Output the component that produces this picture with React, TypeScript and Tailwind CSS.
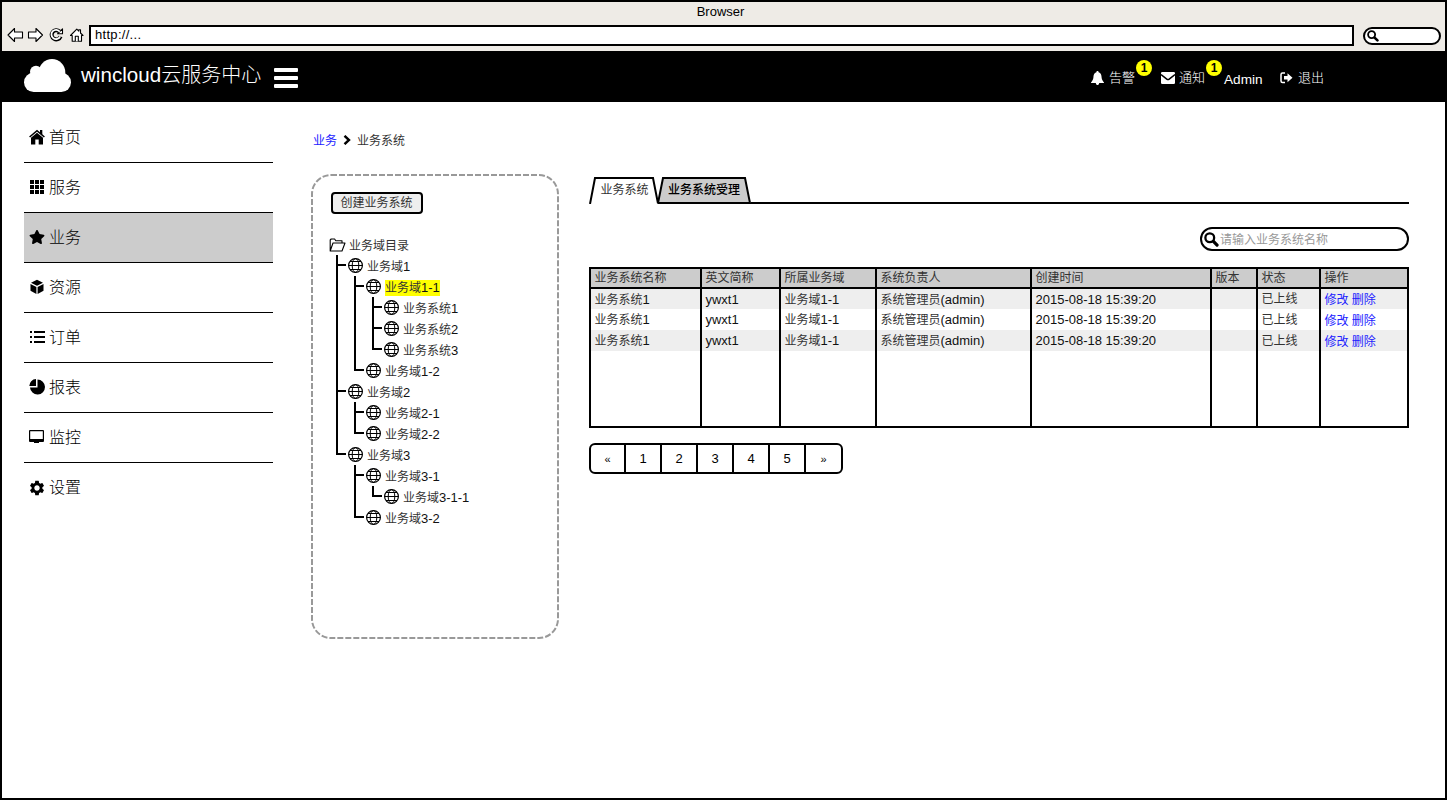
import React from 'react';
import { FaStar } from 'react-icons/fa';
import { MdSettings } from 'react-icons/md';

/* Latin runs are set slightly larger than the Chinese glyphs around them. */
function T({ children }: { children: string }) {
  const parts = children.split(/([\x21-\x7e«»]+(?: [\x21-\x7e]+)*)/);
  return (
    <>
      {parts.map((p, i) =>
        i % 2 ? (
          <span key={i} className="text-[1.083em] text-[#111111]">{p}</span>
        ) : (
          <React.Fragment key={i}>{p}</React.Fragment>
        ),
      )}
    </>
  );
}

const Magnifier = ({ className }: { className: string }) => (
  <svg viewBox="0 0 13 13" className={className} fill="none" stroke="black">
    <circle cx="5" cy="5" r="3.8" strokeWidth="2" />
    <path d="M8.2 8.2 L11.3 11.3" strokeWidth="2.8" strokeLinecap="round" />
  </svg>
);

const Globe = () => (
  <svg viewBox="0 0 16 16" className="h-4 w-4 shrink-0" fill="none" stroke="black" strokeWidth="1">
    <circle cx="8.500" cy="8.500" r="6.900" strokeWidth="1.200" />
    <ellipse cx="8.500" cy="8.500" rx="3.300" ry="6.900" />
    <path d="M1.500 8.500H15.500M3 4.500H14M3 12.500H14" />
  </svg>
);

const Folder = () => (
  <svg viewBox="0 0 17 14" className="h-[14px] w-[17px] shrink-0" fill="none" stroke="black" strokeWidth="1.1" strokeLinejoin="round">
    <path d="M1.2 13V2L2.2 1H5.6L6.8 2.8H13V5M1.2 13L4 5H16L13 13Z" />
  </svg>
);

function BrowserBar() {
  return (
    <div className="flex h-[49px] flex-col bg-[#eeebe6]">
      <div className="h-[19px] pr-[6px] text-center text-[13px] leading-[20px]">Browser</div>
      <div className="flex h-[30px] items-start">
        <svg viewBox="0 0 80 18" className="mt-[5px] ml-[3px] h-[18px] w-20" fill="white" stroke="black" strokeWidth="1.1" strokeLinejoin="round">
          <path d="M3 9L9.500 2.500V6H17.500V12H9.500V15.500Z" />
          <path d="M37.500 9L31 2.500V6H23.500V12H31V15.500Z" />
          <path d="M54.500 5.500A4.600 4.600 0 1 0 55.600 10.500" fill="none" strokeWidth="4" />
          <path d="M52.500 7.800H57.500V2.800Z" />
          <path d="M54.800 5.800A4.600 4.600 0 1 0 55.200 10.400" fill="none" stroke="white" strokeWidth="1.800" />
          <path d="M65.500 9.500L71.800 3.200L73.800 5.200V3.700H75.500V7L78 9.500H76.500V15.300H67.200V9.500Z" />
          <path d="M70.300 15.300V10.300H73.300V15.300" />
        </svg>
        <div className="mt-1 ml-1 h-[21px] w-[1265px] border-2 border-black bg-white pl-1 text-[13px] leading-[16px] tracking-[0.3px]">http://...</div>
        <div className="mt-1.5 ml-[9px] h-[18px] w-[78px] rounded-full border-2 border-black bg-white pt-px pl-0.5">
          <Magnifier className="h-3 w-3" />
        </div>
      </div>
    </div>
  );
}

const Badge = () => (
  <span className="absolute -top-2 left-full flex h-4 w-4 items-center justify-center rounded-full bg-[#ffff00] text-[12px] font-bold text-black">1</span>
);

function Header() {
  return (
    <header className="flex h-[51px] bg-black text-white">
      <svg viewBox="0 0 47 33" className="mt-2 ml-[22px] h-[33px] w-[47px]" fill="white">
        <circle cx="28" cy="13.3" r="13.3" />
        <circle cx="12" cy="12.700" r="6" />
        <circle cx="9.700" cy="23.300" r="9.700" />
        <circle cx="37.300" cy="23.300" r="9.700" />
        <rect x="9.700" y="13.700" width="27.600" height="19.300" />
      </svg>
      <div className="ml-[10px] w-[193px] text-[20px] leading-[48px] font-light whitespace-nowrap">
        <span className="text-[20.6px] font-normal">wincloud</span>云服务中心
      </div>
      <div className="mt-[17px] flex h-5 w-6 flex-col justify-between">
        <i className="h-1 rounded-[1px] bg-white" />
        <i className="h-1 rounded-[1px] bg-white" />
        <i className="h-1 rounded-[1px] bg-white" />
      </div>
      <div className="ml-[793px] flex h-[54px] items-center text-[13px] font-light whitespace-nowrap">
        <svg viewBox="0 0 13 14" className="h-[14px] w-[13px]" fill="white">
          <path d="M6.500 0C7.200 0 7.600 .6 7.600 1.200C10 1.700 10.500 4 10.600 6.500C10.700 9 12 10 13 11.400V12H0V11.400C1 10 2.300 9 2.400 6.500C2.500 4 3 1.700 5.400 1.200C5.400 .6 5.800 0 6.500 0ZM4.800 12H8.200C8 13.500 7.300 14 6.500 14S5 13.500 4.800 12Z" />
        </svg>
        <span className="relative ml-[5px] w-[27px]">告警<Badge /></span>
        <svg viewBox="0 0 14 12" className="ml-[25px] h-3 w-[14px]">
          <rect width="14" height="12" rx="1.200" fill="white" />
          <path d="M0 2.500L5.800 7.200Q7 8 8.200 7.200L14 2.500" fill="none" stroke="black" strokeWidth="1.500" />
        </svg>
        <span className="relative ml-1 w-[27px]">通知<Badge /></span>
        <span className="mt-[4px] ml-[18px] w-[39px] text-[13.6px] font-normal">Admin</span>
        <svg viewBox="0 0 13 12" className="ml-[17px] h-3 w-[13px]">
          <path d="M5 1H2.500Q1 1 1 2.500V9Q1 10.500 2.500 10.500H5" fill="none" stroke="white" strokeWidth="1.500" />
          <path d="M4 4H7.500V1.200L12.500 5.800L7.500 10.300V7.600H4Z" fill="white" />
        </svg>
        <span className="ml-[5px]">退出</span>
      </div>
    </header>
  );
}

const icon = 'h-4 w-4';
const nav: { label: string; glyph: React.ReactNode; active?: boolean }[] = [
  {
    label: '首页',
    glyph: (
      <svg viewBox="0 0 16 16" className={icon}>
        <path d="M2 8.800L8 3.700L14 8.800V15.500H9.700V10.500H6.300V15.500H2Z" />
        <path d="M.6 8L8 1.700L15.400 8" fill="none" stroke="black" strokeWidth="1.600" />
        <path d="M11 1H13.300V6L11 4Z" />
      </svg>
    ),
  },
  {
    label: '服务',
    glyph: (
      <svg viewBox="0 0 16 16" className={icon}>
        <path d="M1 1h4v4H1zM6 1h4v4H6zM11 1h4v4h-4zM1 6h4v4H1zM6 6h4v4H6zM11 6h4v4h-4zM1 11h4v4H1zM6 11h4v4H6zM11 11h4v4h-4z" />
      </svg>
    ),
  },
  { label: '业务', glyph: <FaStar className={icon} />, active: true },
  {
    label: '资源',
    glyph: (
      <svg viewBox="0 0 16 16" className={icon}>
        <path d="M8 .8L14 3.700L8 6.800L2 3.700ZM1.500 5L7.400 8V15L1.500 11.700ZM14.500 5L8.600 8V15L14.500 11.700Z" />
      </svg>
    ),
  },
  {
    label: '订单',
    glyph: (
      <svg viewBox="0 0 16 16" className={icon}>
        <path d="M1 2h2v2H1zM5 2h11v2H5zM1 7h2v2H1zM5 7h11v2H5zM1 12h2v2H1zM5 12h11v2H5z" />
      </svg>
    ),
  },
  {
    label: '报表',
    glyph: (
      <svg viewBox="0 0 16 16" className={icon}>
        <path d="M8.500 .5A7.500 7.500 0 1 1 1 8.500H8.500ZM7 0V7H.3A7 7 0 0 1 7 0Z" />
      </svg>
    ),
  },
  {
    label: '监控',
    glyph: (
      <svg viewBox="0 0 16 16" className={icon}>
        <path fillRule="evenodd" d="M1 1H14Q15 1 15 2V12Q15 13 14 13H10V14H5V13H1Q0 13 0 12V2Q0 1 1 1ZM1.200 2.200V10H13.800V2.200Z" />
      </svg>
    ),
  },
  { label: '设置', glyph: <MdSettings className="-ml-px h-[18px] w-[18px]" /> },
];

function Sidebar() {
  return (
    <nav className="mt-[11px] ml-[22px] w-[249px] shrink-0">
      {nav.map((n, i) => (
        <div
          key={n.label}
          className={`flex h-[50px] items-center pl-[5px] text-[16px] font-light ${i < 7 ? 'border-b border-black' : ''} ${n.active ? 'bg-[#cccccc]' : ''}`}
        >
          <span className="flex w-5 items-center pb-px">{n.glyph}</span>
          {n.label}
        </div>
      ))}
    </nav>
  );
}

/* rails: which ancestor levels keep their vertical line; last: ends its own branch */
const tree: { t: string; rails: boolean[]; last?: boolean; hot?: boolean }[] = [
  { t: '业务域1', rails: [] },
  { t: '业务域1-1', rails: [true], hot: true },
  { t: '业务系统1', rails: [true, true] },
  { t: '业务系统2', rails: [true, true] },
  { t: '业务系统3', rails: [true, true], last: true },
  { t: '业务域1-2', rails: [true], last: true },
  { t: '业务域2', rails: [] },
  { t: '业务域2-1', rails: [true] },
  { t: '业务域2-2', rails: [true], last: true },
  { t: '业务域3', rails: [], last: true },
  { t: '业务域3-1', rails: [false] },
  { t: '业务域3-1-1', rails: [false, true], last: true },
  { t: '业务域3-2', rails: [false], last: true },
];

function TreePanel() {
  return (
    <section className="relative mt-[25px] ml-[-2px] h-[465px] w-[248px] pt-[18px] pl-[19px]">
      <svg className="pointer-events-none absolute inset-0 h-full w-full" fill="none" stroke="#999999" strokeWidth="2">
        <rect x="1" y="1" width="246" height="463" rx="19" strokeDasharray="6 2" />
      </svg>
      <button className="relative ml-px block h-[22px] w-[92px] rounded border-2 border-black bg-[#eeeeee] pr-px text-[12px] leading-[17px] text-[#333333]">创建业务系统</button>
      <div className="mt-5 flex h-[21px] items-center">
        <span className="-ml-px flex"><Folder /></span>
        <span className="ml-[3px] pt-0.5 text-[12px] text-[#333333]">业务域目录</span>
      </div>
      <div className="pl-[6px]">
        {tree.map((n) => (
          <div key={n.t} className="flex h-[21px] items-center text-[12px] text-[#333333]">
            {n.rails.map((r, i) => (
              <i key={i} className={`h-[21px] w-[18px] shrink-0 ${r ? 'border-l-2 border-black' : ''}`} />
            ))}
            <span className="flex h-[21px] w-[10px] shrink-0 flex-col">
              <i className="h-[11px] border-b-2 border-l-2 border-black" />
              <i className={`h-[10px] ${n.last ? '' : 'border-l-2 border-black'}`} />
            </span>
            <span className="ml-px flex pb-px"><Globe /></span>
            <span className={`mt-0.5 ml-1 h-4 leading-[16px] whitespace-nowrap ${n.hot ? 'bg-[#ffff00]' : ''}`}><T>{n.t}</T></span>
          </div>
        ))}
      </div>
    </section>
  );
}

const cols = 'grid grid-cols-[111px_79px_96px_155px_180px_46px_63px_88px]';
const cell = 'border-l-2 border-black pl-[3.5px] whitespace-nowrap';
const heads = ['业务系统名称', '英文简称', '所属业务域', '系统负责人', '创建时间', '版本', '状态', '操作'];
const record = ['业务系统1', 'ywxt1', '业务域1-1', '系统管理员(admin)', '2015-08-18 15:39:20', '', '已上线'];

function DataTable() {
  return (
    <div className="mt-4 h-[161px] w-[820px] border-y-2 border-r-2 border-black text-[12px] text-[#333333]">
      <div className={`${cols} h-5 border-b-2 border-black bg-[#cccccc] leading-[18px]`}>
        {heads.map((h) => <div key={h} className={cell}>{h}</div>)}
      </div>
      {[0, 1, 2].map((r) => (
        <div key={r} className={`${cols} ${r === 0 ? 'h-5' : 'h-[21px]'} ${r % 2 ? '' : 'bg-[#eeeeee]'}`}>
          {record.map((v, i) => (
            <div
              key={i}
              className={`${cell} ${i === 6 ? (r > 0 ? 'leading-[23px]' : 'leading-[20px]') : r > 0 ? 'leading-[22px]' : 'leading-[21px]'}`}
            >
              <T>{v}</T>
            </div>
          ))}
          <div className={`${cell} text-[#2222ff] ${r === 0 ? 'leading-[22px]' : 'leading-[24px]'}`}>
            <a>修改</a> <a>删除</a>
          </div>
        </div>
      ))}
      <div className={`${cols} h-[75px]`}>
        {heads.map((h) => <div key={h} className={cell} />)}
      </div>
    </div>
  );
}

function Tab({ label, selected }: { label: string; selected?: boolean }) {
  return (
    <div className={`relative h-[27px] ${selected ? 'w-[69px]' : 'w-[93px]'}`}>
      {selected ? (
        <svg viewBox="0 0 71 27" className="absolute top-0 left-0 h-[27px] w-[71px]" fill="white" stroke="black" strokeWidth="2">
          <path d="M1 27L6 1H64L69 26.500" />
        </svg>
      ) : (
        <svg viewBox="0 0 95 27" className="absolute top-0 left-0 h-[27px] w-[95px]" fill="#cccccc" stroke="black" strokeWidth="2">
          <path d="M0 26L5 1H87L92 26Z" />
        </svg>
      )}
      <span className={`relative block text-center text-[12px] leading-[27px] ${selected ? 'pl-0.5 text-[#333333]' : 'pr-px font-medium'}`}>{label}</span>
    </div>
  );
}

function Content() {
  return (
    <section className="w-[820px]">
      <div className="mt-[29px] flex h-[27px]">
        <Tab label="业务系统" selected />
        <Tab label="业务系统受理" />
        <div className="flex-1 border-b-2 border-black" />
      </div>
      <div className="mt-[23px] ml-auto flex h-6 w-[209px] items-center rounded-full border-2 border-black pl-[2px]">
        <Magnifier className="h-[15px] w-[15px]" />
        <span className="ml-px pt-px text-[12px] text-[#999999]">请输入业务系统名称</span>
      </div>
      <DataTable />
      <div className="mt-[15px] grid h-[31px] w-[254px] grid-cols-[35px_36px_36px_36px_36px_36px_35px] rounded-[6px] border-2 border-black text-center text-[13px] leading-[27px]">
        {['«', '1', '2', '3', '4', '5', '»'].map((p, i) => (
          <div key={p} className={i < 6 ? 'border-r-2 border-black' : ''}>
            <span className={i === 0 || i === 6 ? 'text-[11px]' : ''}>{p}</span>
          </div>
        ))}
      </div>
    </section>
  );
}

export default function App() {
  return (
    <div className="h-[800px] w-[1447px] overflow-hidden border-2 border-black bg-white font-['Liberation_Sans','Noto_Sans_CJK_SC',sans-serif] text-black">
      <BrowserBar />
      <Header />
      <main className="flex">
        <Sidebar />
        <div className="ml-[40px] w-[246px]">
          <div className="mt-[29px] flex h-[18px] items-center text-[12px] text-[#333333]">
            <a className="pt-0.5 text-[#2222ff]">业务</a>
            <svg viewBox="0 0 8 10" className="mx-1.5 h-[10px] w-2" fill="none" stroke="black" strokeWidth="2.400">
              <path d="M1.500 .8L6 5L1.500 9.200" />
            </svg>
            <span className="pt-0.5">业务系统</span>
          </div>
          <TreePanel />
        </div>
        <div className="ml-[30px] pt-[46px]">
          <Content />
        </div>
      </main>
    </div>
  );
}
